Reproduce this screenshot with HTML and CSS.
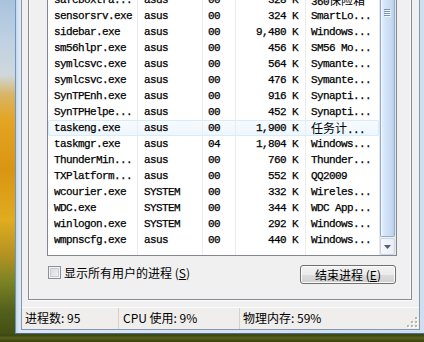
FILE: index.html
```html
<!DOCTYPE html>
<html>
<head>
<meta charset="utf-8">
<link rel="stylesheet" href="styles.css">
</head>
<body>
<div class="desktop">
  <div class="window">
    <div class="client">
      <div class="page">
        <div class="list">
          <div class="rows">
            <div class="row"><span class="c name">safeboxtra...</span><span class="c user">asus</span><span class="c cpu">00</span><span class="c mem">328 K</span><span class="c desc">360<span class="cjk">保险箱</span></span></div>
            <div class="row"><span class="c name">sensorsrv.exe</span><span class="c user">asus</span><span class="c cpu">00</span><span class="c mem">324 K</span><span class="c desc">SmartLo...</span></div>
            <div class="row"><span class="c name">sidebar.exe</span><span class="c user">asus</span><span class="c cpu">00</span><span class="c mem">9,480 K</span><span class="c desc">Windows...</span></div>
            <div class="row"><span class="c name">sm56hlpr.exe</span><span class="c user">asus</span><span class="c cpu">00</span><span class="c mem">456 K</span><span class="c desc">SM56 Mo...</span></div>
            <div class="row"><span class="c name">symlcsvc.exe</span><span class="c user">asus</span><span class="c cpu">00</span><span class="c mem">564 K</span><span class="c desc">Symante...</span></div>
            <div class="row"><span class="c name">symlcsvc.exe</span><span class="c user">asus</span><span class="c cpu">00</span><span class="c mem">476 K</span><span class="c desc">Symante...</span></div>
            <div class="row"><span class="c name">SynTPEnh.exe</span><span class="c user">asus</span><span class="c cpu">00</span><span class="c mem">916 K</span><span class="c desc">Synapti...</span></div>
            <div class="row"><span class="c name">SynTPHelpe...</span><span class="c user">asus</span><span class="c cpu">00</span><span class="c mem">452 K</span><span class="c desc">Synapti...</span></div>
            <div class="row hot"><span class="c name">taskeng.exe</span><span class="c user">asus</span><span class="c cpu">00</span><span class="c mem">1,900 K</span><span class="c desc"><span class="cjk">任务计</span>...</span></div>
            <div class="row"><span class="c name">taskmgr.exe</span><span class="c user">asus</span><span class="c cpu">04</span><span class="c mem">1,804 K</span><span class="c desc">Windows...</span></div>
            <div class="row"><span class="c name">ThunderMin...</span><span class="c user">asus</span><span class="c cpu">00</span><span class="c mem">760 K</span><span class="c desc">Thunder...</span></div>
            <div class="row"><span class="c name">TXPlatform...</span><span class="c user">asus</span><span class="c cpu">00</span><span class="c mem">552 K</span><span class="c desc">QQ2009</span></div>
            <div class="row"><span class="c name">wcourier.exe</span><span class="c user">SYSTEM</span><span class="c cpu">00</span><span class="c mem">332 K</span><span class="c desc">Wireles...</span></div>
            <div class="row"><span class="c name">WDC.exe</span><span class="c user">SYSTEM</span><span class="c cpu">00</span><span class="c mem">344 K</span><span class="c desc">WDC App...</span></div>
            <div class="row"><span class="c name">winlogon.exe</span><span class="c user">SYSTEM</span><span class="c cpu">00</span><span class="c mem">292 K</span><span class="c desc">Windows...</span></div>
            <div class="row"><span class="c name">wmpnscfg.exe</span><span class="c user">asus</span><span class="c cpu">00</span><span class="c mem">440 K</span><span class="c desc">Windows...</span></div>
            <div class="row"><span class="c name"></span><span class="c user"></span><span class="c cpu"></span><span class="c mem"></span><span class="c desc"></span></div>
          </div>
          <div class="vscroll">
            <div class="thumb">
              <svg class="grip" width="7" height="8" viewBox="0 0 7 8"><path d="M0 0.5h6M0 2.5h6M0 4.5h6M0 6.5h6" stroke="#7b95b8" stroke-width="1"/><path d="M1 1.5h6M1 3.5h6M1 5.5h6M1 7.5h6" stroke="#f4f8fd" stroke-width="1"/></svg>
            </div>
            <div class="down"><svg width="7" height="4" viewBox="0 0 7 4"><path d="M0 0h7L3.5 4z" fill="#4d5f7a"/></svg></div>
          </div>
        </div>
        <div class="actions">
          <label class="check"><span class="box"></span><span class="label">显示所有用户的进程 (<u>S</u>)</span></label>
          <button class="btn">结束进程 (<u>E</u>)</button>
        </div>
      </div>
      <div class="status">
        <div class="panel p1">进程数: 95</div>
        <div class="panel p2">CPU 使用: 9%</div>
        <div class="panel p3">物理内存: 59%</div>
        <svg class="sizegrip" width="12" height="12" viewBox="0 0 12 12">
          <g fill="#fff"><rect x="10" y="2" width="2" height="2"/><rect x="6" y="6" width="2" height="2"/><rect x="10" y="6" width="2" height="2"/><rect x="2" y="10" width="2" height="2"/><rect x="6" y="10" width="2" height="2"/><rect x="10" y="10" width="2" height="2"/></g>
          <g fill="#b8b4ae"><rect x="9" y="1" width="2" height="2"/><rect x="5" y="5" width="2" height="2"/><rect x="9" y="5" width="2" height="2"/><rect x="1" y="9" width="2" height="2"/><rect x="5" y="9" width="2" height="2"/><rect x="9" y="9" width="2" height="2"/></g>
        </svg>
      </div>
    </div>
  </div>
</div>
</body>
</html>
```

FILE: styles.css
```css
html, body {
  margin: 0;
  padding: 0;
}
body {
  width: 424px;
  height: 342px;
  overflow: hidden;
}
.desktop {
  width: 424px;
  height: 342px;
  background:
    linear-gradient(to bottom, rgba(0,0,0,0) 334px, #3c4410 335px, #59601a 338px, #34400e 342px),
    linear-gradient(to bottom, #a9c3dd 0, #bfd1e2 40px, #cfd8dc 75px, #d9b463 95px, #e3a523 120px, #d99512 170px, #e0ac20 220px, #b39222 255px, #7d8524 280px, #53611c 310px, #3d4a12 342px);
}
.window {
  margin-left: 15px;
  width: 409px;
  height: 334px;
  box-sizing: border-box;
  border-left: 1px solid #7394bb;
  border-bottom: 1px solid #4f6a8c;
  padding: 0 4px 3px 5px;
  background: linear-gradient(to right, #c4d7ec, #dbe7f4 3px, #cfdff0);
}
.client {
  width: 399px;
  height: 330px;
  box-sizing: border-box;
  border-left: 1px solid #8797ac;
  border-right: 1px solid #8797ac;
  border-bottom: 1px solid #8797ac;
  background: #f0f0f0;
  display: flex;
  flex-direction: column;
}
.page {
  margin-left: 6px;
  width: 384px;
  height: 300px;
  box-sizing: border-box;
  border: 1px solid #898c95;
  border-top: none;
  padding-left: 18px;
  background: #f0f0f0;
  box-shadow: inset 1px 0 0 #fbfbfb, inset -1px 0 0 #fbfbfb, 0 1px 0 #fbfbfb;
}
.list {
  width: 350px;
  height: 256px;
  box-sizing: border-box;
  border: 1px solid #828790;
  border-top: none;
  background: #fff;
  display: flex;
  overflow: hidden;
}
.rows {
  width: 331px;
  margin-top: -8px;
  flex: none;
}
.row {
  display: flex;
  height: 16px;
}
.row.hot {
  background: linear-gradient(to bottom, #f7fbfe, #edf6fe);
  box-shadow: inset 0 0 0 1px #d6ebfb;
  border-radius: 2px;
}
.c {
  box-sizing: border-box;
  height: 16px;
  line-height: 16px;
  border-right: 1px solid #ececec;
  white-space: nowrap;
  overflow: hidden;
  font-family: "Liberation Mono", "Noto Sans CJK SC", monospace;
  font-size: 11px;
  letter-spacing: -0.6px;
  color: #000;
  -webkit-text-stroke: 0.25px #000;
  flex: none;
}
.cjk {
  font-family: "Noto Sans CJK SC", sans-serif;
  font-size: 12px;
  letter-spacing: 0;
  -webkit-text-stroke: 0;
}
.name { width: 90px; padding-left: 6px; }
.user { width: 65px; padding-left: 6px; }
.cpu { width: 33px; padding-left: 5px; }
.mem { width: 70px; padding-right: 7px; text-align: right; }
.desc { width: 73px; padding-left: 5px; border-right: none; }
.vscroll {
  width: 17px;
  flex: none;
  display: flex;
  flex-direction: column;
  background: linear-gradient(to right, #e5e5e5, #f3f3f3 4px, #f3f3f3 12px, #e8e8e8);
}
.thumb {
  flex: 1;
  margin: 0 1px 1px 1px;
  box-sizing: border-box;
  border: 1px solid #8fadd0;
  border-top: none;
  border-radius: 0 0 2px 2px;
  background: linear-gradient(to right, #e6f0fb, #d5e5f7 4px, #c6daf2 10px, #b7cfec);
  box-shadow: inset 1px 0 0 #f4f8fd;
  display: flex;
  flex-direction: column;
  align-items: center;
}
.grip {
  margin-top: 9px;
}
.down {
  height: 17px;
  margin: 0 1px;
  box-sizing: border-box;
  border: 1px solid #c9d5e3;
  border-radius: 2px;
  background: linear-gradient(to right, #f6f8fb, #eaeef3);
  display: flex;
  align-items: center;
  justify-content: center;
}
.down svg { display: block; }
.actions {
  width: 349px;
  margin-top: 9px;
  padding-left: 1px;
  box-sizing: border-box;
  display: flex;
  justify-content: space-between;
  align-items: flex-start;
}
.check {
  display: flex;
  align-items: center;
  margin-top: 1px;
  font-family: "Noto Sans CJK SC", sans-serif;
  font-size: 12px;
  line-height: 13px;
  color: #000;
}
.box {
  width: 13px;
  height: 13px;
  box-sizing: border-box;
  border: 1px solid #8e8f8f;
  background: linear-gradient(135deg, #d2d4d8, #f7f7f7);
  box-shadow: inset 0 0 0 1px #f3f3f3, inset 0 0 0 2px #c9ccd1;
  margin-right: 3px;
}
.label u { text-decoration: underline; }
.btn {
  width: 96px;
  height: 19px;
  margin: 0;
  padding: 0;
  box-sizing: border-box;
  border: 1px solid #707070;
  border-radius: 3px;
  background: linear-gradient(to bottom, #f2f2f2 0, #ebebeb 50%, #dddddd 51%, #cfcfcf 100%);
  box-shadow: inset 0 0 0 1px #fbfbfb;
  font-family: "Noto Sans CJK SC", sans-serif;
  font-size: 12px;
  line-height: 16px;
  color: #000;
}
.status {
  margin-top: 7px;
  height: 22px;
  box-sizing: border-box;
  border-top: 1px solid #fbfbfb;
  display: flex;
  align-items: stretch;
  background: #f0eeec;
  font-family: "Noto Sans CJK SC", sans-serif;
  font-size: 12px;
  color: #000;
}
.panel {
  box-sizing: border-box;
  line-height: 20px;
  white-space: nowrap;
  border-right: 1px solid #d5d2ce;
}
.p1 { width: 97px; padding-left: 3px; }
.p2 { width: 121px; padding-left: 4px; }
.p3 { flex: 1; padding-left: 3px; border-right: none; }
.sizegrip {
  align-self: flex-end;
  margin: 0 1px 1px 0;
}
```
